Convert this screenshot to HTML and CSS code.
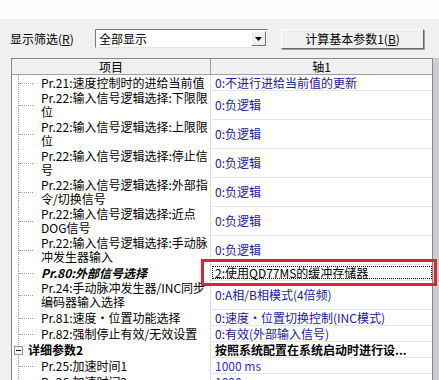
FILE: index.html
```html
<!DOCTYPE html>
<html lang="zh-CN">
<head>
    <meta charset="UTF-8">
    <title>参数设置</title>
    <link rel="stylesheet" href="styles.css">
</head>
<body>
    <div class="topband"></div>

    <div class="toolbar">
        <span class="filter-label">显示筛选(<u>R</u>)</span>
        <div class="combo">
            <span class="combo-text">全部显示</span>
            <span class="combo-btn">
                <svg width="7" height="4" viewBox="0 0 7 4"><path d="M0 0h7L3.5 4z" fill="#000"/></svg>
            </span>
        </div>
        <button class="calc-btn">计算基本参数1(<u>B</u>)</button>
    </div>

    <div class="grid-wrap">
        <div class="grid">
            <div class="row head">
                <div class="cell name">项目</div>
                <div class="cell val">轴1</div>
            </div>

            <div class="row">
                <div class="cell name"><span class="twig"><i></i></span><span class="txt">Pr.21:速度控制时的进给当前值</span></div>
                <div class="cell val">0:不进行进给当前值的更新</div>
            </div>
            <div class="row tall">
                <div class="cell name"><span class="twig"><i></i></span><span class="txt">Pr.22:输入信号逻辑选择:下限限<br>位</span></div>
                <div class="cell val">0:负逻辑</div>
            </div>
            <div class="row tall">
                <div class="cell name"><span class="twig"><i></i></span><span class="txt">Pr.22:输入信号逻辑选择:上限限<br>位</span></div>
                <div class="cell val">0:负逻辑</div>
            </div>
            <div class="row tall">
                <div class="cell name"><span class="twig"><i></i></span><span class="txt">Pr.22:输入信号逻辑选择:停止信<br>号</span></div>
                <div class="cell val">0:负逻辑</div>
            </div>
            <div class="row tall">
                <div class="cell name"><span class="twig"><i></i></span><span class="txt">Pr.22:输入信号逻辑选择:外部指<br>令/切换信号</span></div>
                <div class="cell val">0:负逻辑</div>
            </div>
            <div class="row tall">
                <div class="cell name"><span class="twig"><i></i></span><span class="txt">Pr.22:输入信号逻辑选择:近点<br>DOG信号</span></div>
                <div class="cell val">0:负逻辑</div>
            </div>
            <div class="row tall">
                <div class="cell name"><span class="twig"><i></i></span><span class="txt">Pr.22:输入信号逻辑选择:手动脉<br>冲发生器输入</span></div>
                <div class="cell val">0:负逻辑</div>
            </div>
            <div class="row current">
                <div class="cell name"><span class="twig"><i></i></span><span class="txt changed">Pr.80:外部信号选择</span></div>
                <div class="cell val"><span class="focus">2:使用QD77MS的缓冲存储器</span></div>
            </div>
            <div class="row tall">
                <div class="cell name"><span class="twig"><i></i></span><span class="txt">Pr.24:手动脉冲发生器/INC同步<br>编码器输入选择</span></div>
                <div class="cell val">0:A相/B相模式(4倍频)</div>
            </div>
            <div class="row">
                <div class="cell name"><span class="twig"><i></i></span><span class="txt">Pr.81:速度·位置功能选择</span></div>
                <div class="cell val">0:速度·位置切换控制(INC模式)</div>
            </div>
            <div class="row">
                <div class="cell name"><span class="twig"><i></i></span><span class="txt">Pr.82:强制停止有效/无效设置</span></div>
                <div class="cell val">0:有效(外部输入信号)</div>
            </div>
            <div class="row group">
                <div class="cell name"><span class="twig"><b class="toggle"></b></span><span class="txt">详细参数2</span></div>
                <div class="cell val">按照系统配置在系统启动时进行设...</div>
            </div>
            <div class="row">
                <div class="cell name"><span class="twig"><i></i></span><span class="txt">Pr.25:加速时间1</span></div>
                <div class="cell val num">1000 ms</div>
            </div>
            <div class="row">
                <div class="cell name"><span class="twig"><i></i></span><span class="txt">Pr.26:加速时间2</span></div>
                <div class="cell val num">1000 ms</div>
            </div>
        </div>
        <div class="vscroll"></div>
    </div>

    <div class="mark"></div>
</body>
</html>
```

FILE: styles.css
```css
* {
    box-sizing: border-box;
}

body {
    margin: 0;
    width: 439px;
    height: 380px;
    overflow: hidden;
    position: relative;
    background-color: #f0f0f0;
    font-family: "Noto Sans CJK SC", sans-serif;
    font-size: 12px;
    color: #000;
}

.topband {
    height: 19px;
    background-color: #fdfdfd;
}

.toolbar {
    height: 39px;
    display: flex;
    align-items: center;
    padding-left: 10px;
}

.filter-label {
    width: 85px;
    line-height: 14px;
}

.combo {
    width: 173px;
    height: 19px;
    display: flex;
    background-color: #fff;
    border: 1px solid;
    border-color: #7a7a7a #e3e3e3 #e3e3e3 #7a7a7a;
    padding: 1px;
}

.combo-text {
    flex: 1;
    line-height: 15px;
    padding-left: 2px;
}

.combo-btn {
    width: 15px;
    display: flex;
    align-items: center;
    justify-content: center;
    background-color: #f0f0f0;
    border: 1px solid;
    border-color: #fff #696969 #696969 #fff;
}

.calc-btn {
    margin-left: 13px;
    width: 143px;
    height: 20px;
    padding: 0;
    font: inherit;
    line-height: 14px;
    background-color: #f0f0f0;
    border: 1px solid;
    border-color: #fff #696969 #696969 #fff;
    box-shadow: 1px 1px 0 #a0a0a0;
}

.grid-wrap {
    display: flex;
    margin-left: 11px;
    height: 322px;
}

.grid {
    width: 422px;
    border: 1px solid #828790;
    border-bottom: none;
    background-color: #fff;
    overflow: hidden;
}

.vscroll {
    width: 6px;
    background-color: #cdcdcd;
}

.row {
    display: grid;
    grid-template-columns: 199px 1fr;
    height: 16px;
}

.row.tall {
    height: 29px;
}

.cell {
    line-height: 14px;
    white-space: nowrap;
}

.cell.name {
    display: flex;
    border-right: 1px solid #dcdcdc;
}

.cell.val {
    display: flex;
    align-items: center;
    padding-left: 4px;
    color: #2020a0;
    border-bottom: 1px solid #e6e6e6;
    overflow: hidden;
}

.row.head {
    height: 16px;
    background-color: #f0f0f0;
    border-bottom: 1px solid #a0a0a0;
}

.row.head .cell {
    justify-content: center;
    align-items: center;
    color: #000;
    border-bottom: none;
    padding-left: 0;
}

.row.head .cell.name {
    border-right: 1px solid #a0a0a0;
}

.twig {
    width: 29px;
    flex-shrink: 0;
    display: flex;
    align-items: center;
    background-image: linear-gradient(to bottom, #9a9a9a 50%, transparent 50%);
    background-size: 1px 2px;
    background-position: 6px 0;
    background-repeat: repeat-y;
}

.twig i {
    margin-left: 7px;
    width: 14px;
    border-top: 1px dotted #9a9a9a;
}

.txt {
    line-height: 14px;
}

.row:not(.tall) .txt {
    align-self: center;
}

.txt.changed {
    font-weight: bold;
    font-style: italic;
}

.row.group .twig {
    width: 16px;
}

.toggle {
    margin-left: 2px;
    width: 9px;
    height: 9px;
    border: 1px solid #919191;
    background: #fff linear-gradient(#000, #000) center / 5px 1px no-repeat;
}

.row.group .txt {
    font-weight: bold;
}

.row.group .cell.val {
    color: #000;
    font-weight: bold;
}

.cell.val.num {
    color: #3030c8;
}

.row.current .cell.val {
    color: #000;
    padding: 1px 0 1px 1px;
}

.focus {
    flex: 1;
    height: 100%;
    display: flex;
    align-items: center;
    padding-left: 2px;
    border: 1px dotted #000;
}

/* red annotation frame over the edited value */
.mark {
    position: absolute;
    left: 201px;
    top: 259px;
    width: 236px;
    height: 27px;
    border: 3px solid #d7282f;
}
```
